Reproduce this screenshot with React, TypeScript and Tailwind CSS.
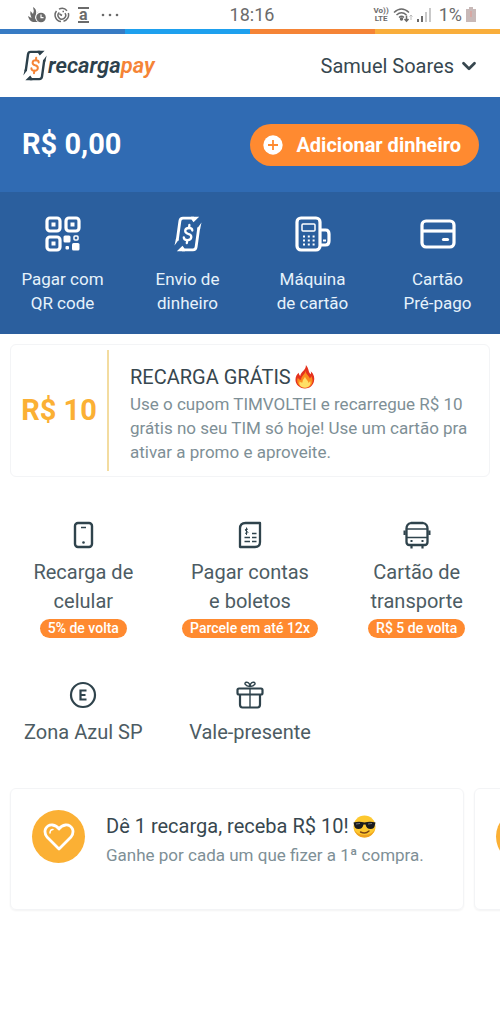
import { ChevronDown } from "lucide-react";
import type { ReactNode } from "react";

function TransferMark({ dollar }: { dollar: string }) {
  return (
    <svg width="28" height="36" viewBox="0 0 28 36" fill="none" aria-hidden="true">
      <path
        d="M20 2.200H9Q6.300 2.200 5.900 5L3.200 24.500M8 33.800H19Q21.700 33.800 22.100 31L24.800 11.500"
        stroke="currentColor"
        strokeWidth="2.800"
      />
      <path d="M17 .8H25.200L19.500 6.300 17.500 3.500ZM11 35.200H2.800L8.500 29.700 10.500 32.500ZM.5 29.500 2 22.500 4.800 23.500ZM27.500 6.500 26 13.500 23.200 12.500Z" fill="currentColor" />
      <g stroke={dollar} strokeWidth="2.300" strokeLinecap="round" strokeLinejoin="round">
        <path d="M18.300 14.500Q18.300 12 15 12 11.300 12 11.200 14.800 11.200 17 14.200 17.800 17.500 18.600 17.300 21.200 17 24.200 13.300 24.200 9.800 24.200 9.800 21.300" />
        <path d="M15.400 9 15 12M13.300 24.200 12.800 27" />
      </g>
    </svg>
  );
}

function QrIcon() {
  return (
    <svg width="36" height="36" viewBox="0 0 36 36" fill="none" aria-hidden="true">
      <g stroke="currentColor" strokeWidth="3.200">
        <rect x="2" y="2" width="13" height="13" rx="3" />
        <rect x="21" y="2" width="13" height="13" rx="3" />
        <rect x="2" y="21" width="13" height="13" rx="3" />
      </g>
      <g fill="currentColor">
        <rect x="6.500" y="6.500" width="4" height="4" />
        <rect x="25.500" y="6.500" width="4" height="4" />
        <rect x="6.500" y="25.500" width="4" height="4" />
        <rect x="18.500" y="19.500" width="7" height="7" rx="1.500" />
        <rect x="27" y="27" width="7.500" height="7.500" rx="1.500" />
        <rect x="20.500" y="30" width="3.500" height="3.500" rx="1" />
      </g>
      <rect x="29" y="20" width="4" height="4" rx="1" stroke="currentColor" strokeWidth="1.500" />
    </svg>
  );
}

function TerminalIcon() {
  return (
    <svg width="36" height="36" viewBox="0 0 36 36" fill="none" stroke="currentColor" aria-hidden="true">
      <rect x="2" y="2" width="23" height="32" rx="4" strokeWidth="3.200" />
      <path d="M25 14H30.500Q34 14 34 18V25Q34 29 30.500 29H25" strokeWidth="3.200" />
      <rect x="7" y="8" width="13" height="7" rx="1" strokeWidth="1.500" />
      <path d="M8 20.500H20M8 24.500H20M8 28.500H20" strokeWidth="1.800" strokeDasharray="2 2.800" />
      <path d="M28 24.500H31" strokeWidth="2" />
    </svg>
  );
}

function CardIcon() {
  return (
    <svg width="36" height="36" viewBox="0 0 36 36" fill="none" stroke="currentColor" strokeWidth="3.200" aria-hidden="true">
      <rect x="2" y="5" width="32" height="26" rx="4" />
      <path d="M2 15H34" />
      <path d="M23.500 23.500H27.500" strokeLinecap="round" />
    </svg>
  );
}

function PhoneIcon() {
  return (
    <svg width="28" height="28" viewBox="0 0 28 28" fill="none" stroke="currentColor" aria-hidden="true">
      <rect x="6" y="2" width="17" height="24" rx="3" strokeWidth="2.400" />
      <path d="M12 6.500H17" strokeWidth="1.500" />
      <circle cx="14.500" cy="21.500" r="1.300" fill="currentColor" stroke="none" />
    </svg>
  );
}

function BillIcon() {
  return (
    <svg width="28" height="28" viewBox="0 0 28 28" fill="none" stroke="currentColor" aria-hidden="true">
      <path d="M9.500 2H24V21Q24 26 19 26H4V7.500Q4 2 9.500 2Z" strokeWidth="2.300" strokeLinejoin="round" />
      <path d="M8.500 16.500H14M8.500 20.500H14M16 12.500H20.500M16 16.500H20.500M16 20.500H20.500" strokeWidth="1.300" />
      <path d="M12 8.300Q9.300 7.300 9.200 8.900C9.200 10.400 11.900 9.900 11.900 11.500Q11.700 12.900 9 12.200M10.500 6.500V14" strokeWidth="1" />
    </svg>
  );
}

function BusIcon() {
  return (
    <svg width="28" height="28" viewBox="0 0 28 28" fill="none" stroke="currentColor" aria-hidden="true">
      <path d="M8 2H20Q24.500 3 24.500 7.500V21Q24.500 24 21.500 24H6.500Q3.500 24 3.500 21V7.500Q3.500 3 8 2Z" strokeWidth="2.300" />
      <path d="M3.500 8H24.500M3.500 16.500H24.500" strokeWidth="1.500" />
      <path d="M1.600 9.500V14M26.400 9.500V14M8.500 24V27.500M19.500 24V27.500" strokeWidth="2.200" />
      <path d="M7.500 20H9.500M18.500 20H20.500" strokeWidth="2" />
    </svg>
  );
}

function ZoneIcon() {
  return (
    <svg width="28" height="28" viewBox="0 0 28 28" fill="none" stroke="currentColor" aria-hidden="true">
      <circle cx="14" cy="14" r="12" strokeWidth="2.200" />
      <path d="M17.500 9.500H11.500V18.500H17.500M11.500 14H16.500" strokeWidth="2.200" />
    </svg>
  );
}

function GiftIcon() {
  return (
    <svg width="28" height="28" viewBox="0 0 28 28" fill="none" stroke="currentColor" aria-hidden="true">
      <rect x="1.500" y="7.500" width="25" height="6" rx="1.500" strokeWidth="2.200" />
      <path d="M4 14V23.500Q4 26.500 6.500 26.500H21.500Q24 26.500 24 23.500V14" strokeWidth="2.200" />
      <path d="M14 7V26" strokeWidth="1.400" />
      <path d="M14 5.500C9 5.500 7.500 1.500 10.500 1.200 13 1 14 3.500 14 5.500 14 3.500 15 1 17.500 1.200 20.500 1.500 19 5.500 14 5.500Z" strokeWidth="1.400" />
    </svg>
  );
}

function Fire() {
  return (
    <svg width="20" height="24" viewBox="0 0 21 25" role="img" aria-label="fogo">
      <path d="M11.500 0C15 4 13.500 7 16.500 9.500 17 8.500 17 7.500 16.500 6.500 20 9.500 21 13.500 19.800 17.500 18.500 22 15 24.500 10.500 24.500 4.500 24.500.5 20.500.5 15.500.5 12 2 9.500 4 8 4 9.500 4.500 10.500 5.500 11.500 6 7 11.500 6 11.500 0Z" fill="#e5321d" />
      <path d="M11 6C11.500 10 15 11.500 15.500 14 16.500 13.500 17 12.500 17 11.500 19 15 19 19 16.500 21.500 13.500 24.500 7.500 24.500 4.500 21.500 2 19 1.800 16 3 13 4 15 5 15.500 6.500 15.500 6 11.500 10.500 10.500 11 6Z" fill="#fb8c1d" />
      <path d="M10.500 12C11 15 14 16 14 18.500 15 18.500 15.500 17.500 15.800 16.500 17.500 20.500 14.500 23.800 10.500 23.800 6 23.800 3.500 20.500 5 17 6 18.500 7 18.700 8 18 7.500 15.500 10 14.500 10.500 12Z" fill="#ffdf65" />
    </svg>
  );
}

function Sunglasses() {
  return (
    <svg width="23" height="23" viewBox="0 0 23 23" role="img" aria-label="óculos escuros">
      <circle cx="11.500" cy="11.500" r="11" fill="#fdc82f" />
      <path d="M.7 13.500A11 11 0 0 0 22.300 13.500Q20 20 11.500 20 3 20 .7 13.500Z" fill="#eea022" />
      <path d="M.5 7.500Q6 5.800 11.500 7.500 17 5.800 22.500 7.500L22 9.500Q21.500 14 17.500 14 13.500 14 12.500 9.500H10.500Q9.500 14 5.500 14 1.500 14 1 9.500Z" fill="#1b1b1d" />
      <path d="M3 9 7 8.500M15 9 19 8.500" stroke="#777" />
      <path d="M7.500 17Q12.500 19.500 16 16" fill="none" stroke="#7b4515" strokeWidth="1.400" strokeLinecap="round" />
    </svg>
  );
}

function StatusBar() {
  return (
    <div className="flex h-[29px] items-center justify-between pr-6 pl-7 text-[#6b6b6b]">
      <div className="flex flex-1 items-center gap-2">
        <svg width="18" height="16" viewBox="0 0 18 16" fill="currentColor" aria-hidden="true">
          <path d="M5 0Q9 2 8 7L11 4Q7 7 7 11 8 14 10 15H5Q1 14 0 9L3.500 11Q1.500 7 2.500 4L5 7Q6.500 4 5 0Z" />
          <circle cx="13" cy="10.500" r="4.800" />
          <path d="M13 7.500V10.700H15.500" fill="none" stroke="white" strokeWidth="1.200" />
        </svg>
        <svg width="16" height="16" viewBox="0 0 16 16" fill="none" stroke="currentColor" strokeWidth="1.500" aria-hidden="true">
          <path d="M2.500 4A6.500 6.500 0 0 0 7 14.500M9.500 14.300A6.500 6.500 0 0 0 14.300 6M5 2.200A6.500 6.500 0 0 1 13 3.700" />
          <path d="M5.300 5.500A3.800 3.800 0 1 0 11 6.200M8 8.500 5.500 7M8.500 4.500H10" />
        </svg>
        <span className="border-y-2 border-[#6b6b6b] px-px text-base leading-3 font-bold">a</span>
        <svg width="18" height="4" viewBox="0 0 18 4" fill="currentColor" className="ml-1" aria-hidden="true">
          <circle cx="2" cy="2" r="1.300" />
          <circle cx="9" cy="2" r="1.300" />
          <circle cx="16" cy="2" r="1.300" />
        </svg>
      </div>
      <span className="text-lg">18:16</span>
      <div className="flex flex-1 items-center justify-end gap-1">
        <span className="text-center text-[8px] leading-2 font-bold">
          Vo))
          <br />
          LTE
        </span>
        <svg width="20" height="16" viewBox="0 0 20 16" fill="none" stroke="currentColor" strokeWidth="1.500" aria-hidden="true">
          <path d="M1 5.500Q8.500-1.500 16 5.500M3.500 8Q8.500 3.500 13.500 8M6 10.500Q8.500 8.300 11 10.500" />
          <circle cx="8.500" cy="12" r="1" fill="currentColor" />
          <path d="M13.500 8.500V14M11.500 12 13.500 14.200 15.500 12" />
          <path d="M18 13V8M16.500 9.500 18 8 19.500 9.500" stroke="#bbb" strokeWidth="1" />
        </svg>
        <svg width="14" height="14" viewBox="0 0 14 14" aria-hidden="true">
          <path d="M0 11H2V14H0ZM4 8H6V14H4Z" fill="#6b6b6b" />
          <path d="M8 4H10V14H8ZM12 0H14V14H12Z" fill="#c9c9c9" />
        </svg>
        <span className="ml-1 text-lg">1%</span>
        <svg width="10" height="15" viewBox="0 0 10 15" aria-hidden="true">
          <path d="M3 0H7V2H10V15H0V2H3Z" fill="#c8b9b8" />
          <path d="M4.300 4H5.700V10H4.300Z" fill="#dda19b" />
        </svg>
      </div>
    </div>
  );
}

const actions: { icon: ReactNode; lines: [string, string] }[] = [
  { icon: <QrIcon />, lines: ["Pagar com", "QR code"] },
  { icon: <TransferMark dollar="currentColor" />, lines: ["Envio de", "dinheiro"] },
  { icon: <TerminalIcon />, lines: ["Máquina", "de cartão"] },
  { icon: <CardIcon />, lines: ["Cartão", "Pré-pago"] },
];

const services: { icon: ReactNode; lines: string[]; badge?: string }[] = [
  { icon: <PhoneIcon />, lines: ["Recarga de", "celular"], badge: "5% de volta" },
  { icon: <BillIcon />, lines: ["Pagar contas", "e boletos"], badge: "Parcele em até 12x" },
  { icon: <BusIcon />, lines: ["Cartão de", "transporte"], badge: "R$ 5 de volta" },
  { icon: <ZoneIcon />, lines: ["Zona Azul SP"] },
  { icon: <GiftIcon />, lines: ["Vale-presente"] },
];

function OfferCard({ children }: { children?: ReactNode }) {
  return (
    <article className="flex h-[122px] w-[calc(100%-26px)] shrink-0 gap-[21px] rounded-md border border-gray-100 px-[21px] pt-[21px] shadow-xs">
      <div className="flex size-[53px] shrink-0 items-center justify-center rounded-full bg-[#fbb034] text-white">
        <svg width="32" height="28" viewBox="0 0 32 28" fill="none" stroke="currentColor" strokeWidth="2.800" strokeLinejoin="round" aria-hidden="true">
          <path d="M16 26 4 14Q1 10 2.500 6 5 1.500 9.500 2 13.500 2.500 16 6 18.500 2.500 22.500 2 27 1.500 29.500 6 31 10 28 14Z" />
          <path d="M7 10Q7 6.500 10 6.500" strokeWidth="1.500" strokeLinecap="round" />
        </svg>
      </div>
      {children}
    </article>
  );
}

export default function App() {
  return (
    <div className="min-h-screen overflow-hidden bg-white font-['Roboto',sans-serif] text-[#37474f]">
      <StatusBar />
      <div className="grid h-[5px] grid-cols-4">
        <span className="bg-[#377bc4]" />
        <span className="bg-[#1ea0ee]" />
        <span className="bg-[#f58436]" />
        <span className="bg-[#f9ae3b]" />
      </div>

      <header className="flex h-[63px] items-center justify-between pr-5 pl-[22px]">
        <div className="flex items-center text-[#2c404b]">
          <span className="flex w-[26px] items-center [&>svg]:h-[31px]">
            <TransferMark dollar="#f58436" />
          </span>
          <span className="text-[22px] font-semibold italic">
            recarga<span className="text-[#f58436]">pay</span>
          </span>
        </div>
        <button type="button" className="flex items-center gap-1 text-xl">
          Samuel Soares
          <ChevronDown size={22} strokeWidth={3} />
        </button>
      </header>

      <section className="flex h-[95px] items-center justify-between bg-[#306bb3] pr-[21px] pl-[22px] text-white">
        <p className="text-[29px] font-bold">R$ 0,00</p>
        <button type="button" className="flex h-[42px] items-center gap-[13px] rounded-full bg-[#ff8a30] pr-[18px] pl-[13px] text-xl font-bold">
          <svg width="20" height="20" viewBox="0 0 20 20" aria-hidden="true">
            <circle cx="10" cy="10" r="9.700" fill="white" />
            <path d="M10 5V15M5 10H15" stroke="#ff8a30" strokeWidth="1.800" />
          </svg>
          Adicionar dinheiro
        </button>
      </section>

      <nav className="grid grid-cols-4 bg-[#2b5f9e] pt-6 pb-[19px] text-[#e6f2fb]">
        {actions.map((action) => (
          <button key={action.lines[0]} type="button" className="flex flex-col items-center gap-[15px] text-[17px] leading-6">
            <span className="text-white">{action.icon}</span>
            <span>
              {action.lines[0]}
              <br />
              {action.lines[1]}
            </span>
          </button>
        ))}
      </nav>

      <article className="mx-[10px] mt-[10px] flex rounded-md border border-gray-100 py-[5px]">
        <p className="flex w-[98px] shrink-0 items-center justify-center border-r-2 border-[#f3dca0] text-[29px] font-bold text-[#fbb034]">R$ 10</p>
        <div className="pt-[15px] pb-[7px] pl-[21px]">
          <h2 className="flex items-center gap-1 text-xl leading-6">
            RECARGA GRÁTIS <Fire />
          </h2>
          <p className="mt-[3px] text-[17px] leading-6 text-[#7e8f96]">
            Use o cupom TIMVOLTEI e recarregue R$ 10
            <br />
            grátis no seu TIM só hoje! Use um cartão pra
            <br />
            ativar a promo e aproveite.
          </p>
        </div>
      </article>

      <section className="mt-11 grid grid-cols-3 gap-y-[43px]">
        {services.map((service) => (
          <button key={service.lines[0]} type="button" className="flex flex-col items-center text-xl leading-[29px] text-[#4d5c63]">
            <span className="mb-[9px] text-[#2f434c]">{service.icon}</span>
            {service.lines.map((line) => (
              <span key={line}>{line}</span>
            ))}
            {service.badge ? (
              <span className="mt-[3px] rounded-full bg-[#ff8a30] px-2 text-sm leading-[19px] font-medium text-white">{service.badge}</span>
            ) : null}
          </button>
        ))}
      </section>

      <section className="mt-[41px] flex gap-[10px] overflow-hidden px-[10px] pb-1">
        <OfferCard>
          <div className="pt-1">
            <h2 className="flex items-center gap-1 text-xl leading-6">
              Dê 1 recarga, receba R$ 10! <Sunglasses />
            </h2>
            <p className="mt-[5px] text-[17px] leading-6 text-[#7e8f96]">Ganhe por cada um que fizer a 1ª compra.</p>
          </div>
        </OfferCard>
        <OfferCard />
      </section>
    </div>
  );
}
